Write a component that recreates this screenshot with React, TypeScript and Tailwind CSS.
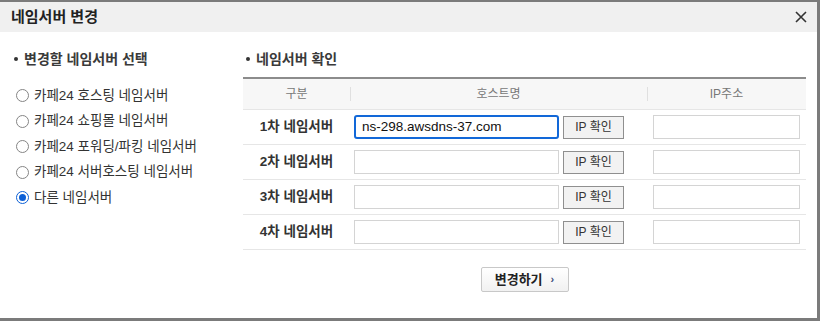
import React from 'react';

const FONT = '"Liberation Sans", "Noto Sans CJK KR", sans-serif';

const options = [
  '카페24 호스팅 네임서버',
  '카페24 쇼핑몰 네임서버',
  '카페24 포워딩/파킹 네임서버',
  '카페24 서버호스팅 네임서버',
  '다른 네임서버',
];

const rows = [
  { label: '1차 네임서버', value: 'ns-298.awsdns-37.com' },
  { label: '2차 네임서버', value: '' },
  { label: '3차 네임서버', value: '' },
  { label: '4차 네임서버', value: '' },
];

function Radio({ checked }: { checked?: boolean }) {
  if (checked) {
    return (
      <span className="flex size-[13px] shrink-0 items-center justify-center rounded-full border border-[#0b5fd6] bg-white">
        <span className="size-[7px] rounded-full bg-[#0b5fd6]" />
      </span>
    );
  }
  return <span className="size-[13px] shrink-0 rounded-full border border-[#858585] bg-white" />;
}

function SectionTitle({ children }: { children: React.ReactNode }) {
  return (
    <div className="flex h-[18px] items-center gap-[6px] text-[14px] font-bold text-[#3a3a3a]">
      <span className="size-[4px] rounded-full bg-[#333]" />
      {children}
    </div>
  );
}

export default function App() {
  return (
    <div
      className="flex h-[321px] w-[820px] flex-col border-t-2 border-r-[3px] border-b-[3px] border-[#7b7b7b] bg-white"
      style={{ fontFamily: FONT }}
    >
      <div className="flex h-[30px] shrink-0 items-center justify-between bg-[#f0f0f0] pl-[11px] pr-[9px]">
        <span className="text-[15px] font-bold text-[#222]">네임서버 변경</span>
        <svg width="14" height="14" viewBox="0 0 14 14" className="text-[#333]">
          <path d="M2 2 L12 12 M12 2 L2 12" stroke="currentColor" strokeWidth="1.6" />
        </svg>
      </div>

      <div className="flex flex-1 pt-[18px]">
        <div className="w-[243px] pl-[14px]">
          <SectionTitle>변경할 네임서버 선택</SectionTitle>
          <div className="mt-[15px] flex flex-col">
            {options.map((o, i) => (
              <div key={o} className="flex h-[25.5px] items-center gap-[5px] pl-[2px] text-[13.5px] text-[#333]">
                <Radio checked={i === options.length - 1} />
                <span>{o}</span>
              </div>
            ))}
          </div>
        </div>

        <div className="w-[563px]">
          <div className="pl-[3px]">
            <SectionTitle>네임서버 확인</SectionTitle>
          </div>
          <div className="mt-[9px] border-t-2 border-[#8c8c8c]">
            <div className="grid h-[31px] grid-cols-[107px_297px_159px] items-center border-b border-[#e6e6e6] bg-[#f7f7f7] text-[12px] text-[#777]">
              <div className="flex items-center justify-center">구분</div>
              <div className="relative flex items-center justify-center">
                <span className="absolute left-0 top-1/2 h-[14px] w-px -translate-y-1/2 bg-[#e0e0e0]" />
                호스트명
              </div>
              <div className="relative flex items-center justify-center">
                <span className="absolute left-0 top-1/2 h-[14px] w-px -translate-y-1/2 bg-[#e0e0e0]" />
                IP주소
              </div>
            </div>
            {rows.map((r, i) => (
              <div
                key={r.label}
                className="grid h-[35px] grid-cols-[107px_297px_159px] items-center border-b border-[#e6e6e6]"
              >
                <div className="text-center text-[13.5px] font-bold text-[#333]">{r.label}</div>
                <div className="flex items-center gap-[4px] pl-[4px]">
                  <div
                    className={
                      i === 0
                        ? 'flex h-[24px] w-[205px] items-center rounded-[3px] border-2 border-[#1268d8] pl-[6px] text-[13.5px] text-[#111]'
                        : 'h-[24px] w-[205px] border border-[#d4d4d4] bg-white'
                    }
                  >
                    {r.value}
                  </div>
                  <button className="flex h-[23px] w-[61px] items-center justify-center border border-[#8f8f8f] bg-[#f2f2f2] text-[12px] text-[#333]">
                    IP 확인
                  </button>
                </div>
                <div className="pl-[6px]">
                  <div className="h-[24px] w-[147px] border border-[#d4d4d4] bg-white" />
                </div>
              </div>
            ))}
          </div>
          <div className="mt-[17px] flex justify-center">
            <button className="flex h-[25px] w-[88px] items-center justify-center gap-[8px] rounded-[2px] border border-[#c8c8c8] bg-gradient-to-b from-white to-[#f1f1f1] text-[13px] font-bold text-[#222]">
              변경하기
              <span className="text-[11px] text-[#3b4d7a]">›</span>
            </button>
          </div>
        </div>
      </div>
    </div>
  );
}
